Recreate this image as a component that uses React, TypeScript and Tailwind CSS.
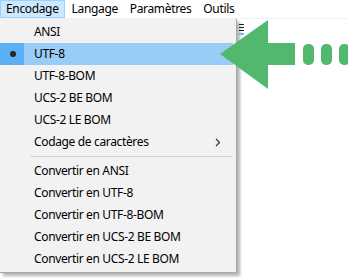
import React from "react";

const font = { fontFamily: '"Noto Sans", "Open Sans", sans-serif' };

function Item({ label, selected, sub }: { label: string; selected?: boolean; sub?: boolean }) {
  return (
    <div className={`flex h-[22px] items-center ${selected ? "bg-[#99ccf7]" : ""}`}>
      <div className={`flex h-full w-[24px] shrink-0 items-center justify-center ${selected ? "bg-[#5aaff5]" : ""}`}>
        {selected && <div className="ml-[2px] h-[6px] w-[6px] rounded-full bg-[#262626]" />}
      </div>
      <span className="ml-[10px] flex-1 text-[12px] tracking-[-0.35px] text-black">{label}</span>
      {sub && (
        <svg width="6" height="9" viewBox="0 0 6 9" className="mr-[12px]">
          <path d="M1 1 L4.5 4.5 L1 8" stroke="#333" strokeWidth="1.2" fill="none" />
        </svg>
      )}
    </div>
  );
}

export default function App() {
  return (
    <div className="relative h-[278px] w-[348px] overflow-hidden bg-white" style={font}>
      <div className="flex h-[19px] items-start border-b border-[#f0f0f0] bg-white text-[12px] tracking-[-0.35px] text-black">
        <div className="flex h-[18px] items-center border border-[#99d1ff] bg-[#cce8ff] px-[5px]">Encodage</div>
        <div className="flex h-[18px] items-center pl-[7px] pr-[6px]">Langage</div>
        <div className="flex h-[18px] items-center px-[6px]">Paramètres</div>
        <div className="flex h-[18px] items-center px-[6px]">Outils</div>
      </div>
      <div className="flex">
        <div className="w-[237px] shrink-0 border-r border-b border-[#a8a8a8] bg-[#f2f2f2] py-[2px] pr-[3px] shadow-[3px_3px_3px_rgba(0,0,0,0.3)]">
          <Item label="ANSI" />
          <Item label="UTF-8" selected />
          <Item label="UTF-8-BOM" />
          <Item label="UCS-2 BE BOM" />
          <Item label="UCS-2 LE BOM" />
          <Item label="Codage de caractères" sub />
          <div className="flex h-[7px] items-center pl-[30px]">
            <div className="h-px w-full bg-[#d7d7d7]" />
          </div>
          <Item label="Convertir en ANSI" />
          <Item label="Convertir en UTF-8" />
          <Item label="Convertir en UTF-8-BOM" />
          <Item label="Convertir en UCS-2 BE BOM" />
          <Item label="Convertir en UCS-2 LE BOM" />
        </div>
        <div className="ml-[2px] mt-[5px] flex h-[12px] w-[5px] flex-col gap-[2px]">
          <div className="h-[1px] w-[5px] bg-[#222]" />
          <div className="h-[1px] w-[5px] bg-[#222]" />
          <div className="h-[1px] w-[5px] bg-[#222]" />
          <div className="h-[2px] w-[5px] bg-[#7fb3e0]" />
        </div>
      </div>
      <svg className="absolute left-[220px] top-[20px]" width="128" height="70" viewBox="0 0 128 70">
        <polygon points="0,34 48,0 48,23 75,23 75,45 48,45 48,69" fill="#52b86e" />
        <rect x="83" y="24" width="11" height="21" rx="5" fill="#52b86e" />
        <rect x="101" y="24" width="11" height="21" rx="5" fill="#52b86e" />
        <rect x="119" y="24" width="11" height="21" rx="5" fill="#52b86e" />
      </svg>
    </div>
  );
}
